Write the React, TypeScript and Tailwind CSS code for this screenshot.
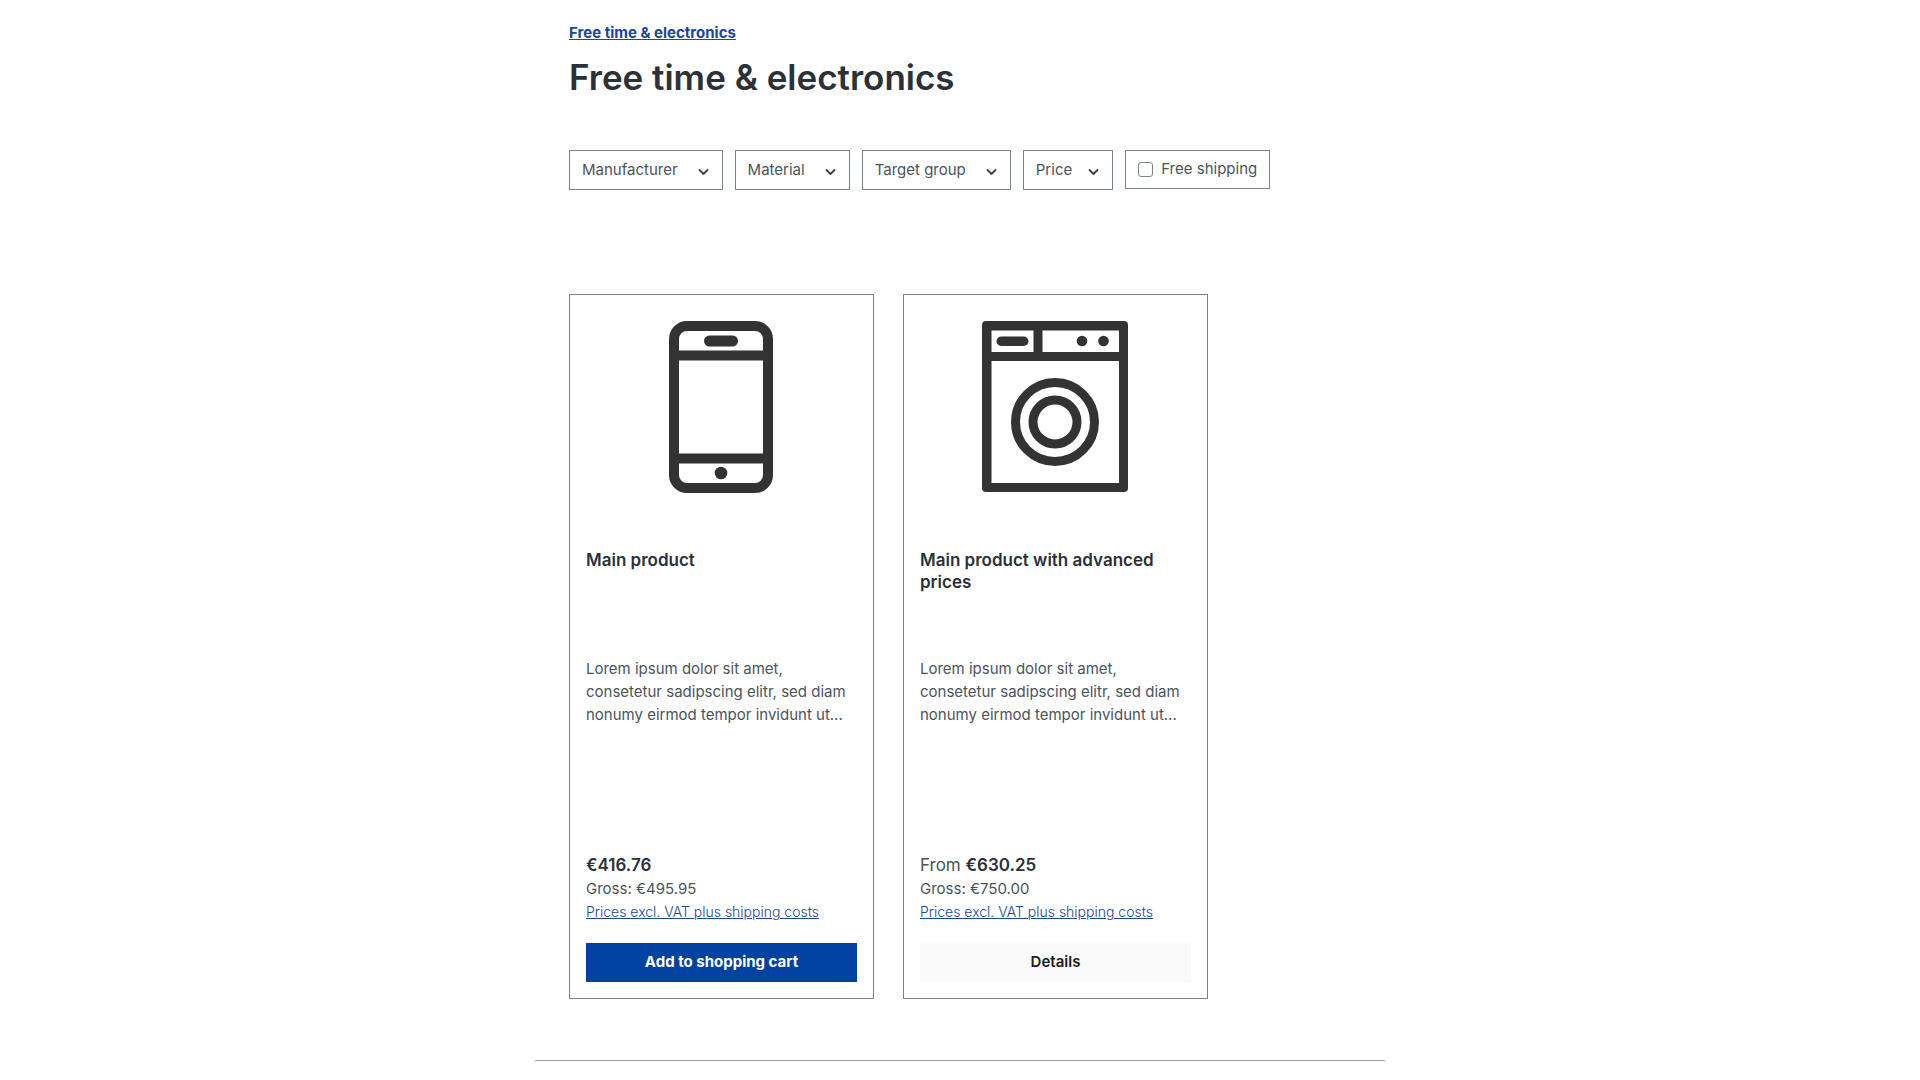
import React from "react";

function PhoneIcon() {
  return (
    <svg viewBox="0 0 104 172" className="h-[172px] w-[104px]" role="img" aria-label="Smartphone">
      <rect x="5" y="5" width="94" height="162" rx="13" fill="none" stroke="#333" strokeWidth="10" />
      <path d="M5 34.500H99M5 137.500H99" stroke="#333" strokeWidth="10" />
      <rect x="35" y="14.500" width="34" height="11" rx="5.500" fill="#333" />
      <circle cx="52" cy="152" r="6.300" fill="#333" />
    </svg>
  );
}

function WasherIcon() {
  return (
    <svg viewBox="0 0 146 172" className="h-[172px] w-[146px]" role="img" aria-label="Washing machine">
      <g stroke="#333" strokeWidth="9" fill="none">
        <path d="M5 35.500H141M56 5V35" />
        <circle cx="73" cy="101" r="39.500" />
        <circle cx="73" cy="101" r="22" />
      </g>
      <path
        fill="#333"
        fillRule="evenodd"
        d="M4 0H142Q146 0 146 4V167Q146 171 142 171H4Q0 171 0 167V4Q0 0 4 0ZM9.500 9.500V162H137V9.500Z"
      />
      <rect x="14.500" y="15.500" width="32" height="9.500" rx="4.750" fill="#333" />
      <circle cx="100" cy="20" r="5.300" fill="#333" />
      <circle cx="121.500" cy="20" r="5.300" fill="#333" />
    </svg>
  );
}

function Filter({ label, compact }: { label: string; compact?: boolean }) {
  return (
    <button
      type="button"
      aria-haspopup="listbox"
      className={
        compact
          ? "flex h-10 items-center gap-4 border border-[#798490] px-3"
          : "flex h-10 items-center gap-5 border border-[#798490] px-3"
      }
    >
      {label}
      <svg viewBox="0 0 12 12" className="mt-1 size-3" aria-hidden="true">
        <path d="M1.500 4L5.500 8L9.500 4" fill="none" stroke="#39434a" strokeWidth="1.800" strokeLinecap="round" strokeLinejoin="round" />
      </svg>
    </button>
  );
}

interface ProductProps {
  name: string;
  icon: React.ReactNode;
  from?: boolean;
  price: string;
  gross: string;
  action: string;
  primary?: boolean;
}

function Product({ name, icon, from, price, gross, action, primary }: ProductProps) {
  return (
    <article className="flex flex-col border border-[#798490] p-4">
      <div className="flex h-[220px] justify-center pt-[10px] pr-[1px]">{icon}</div>
      <h2 className="mt-[18px] h-[88px] text-[17px] leading-[22px] font-semibold text-[#2b3136]">{name}</h2>
      <p className="mt-5 leading-[23px]">
        Lorem ipsum dolor sit amet, consetetur sadipscing elitr, sed diam nonumy eirmod tempor invidunt ut...
      </p>
      <p className="mt-[127px] text-[17px] leading-6">
        {from && "From "}
        <strong className="font-semibold text-[#2b3136]">{price}</strong>
      </p>
      <p className="leading-[23px]">Gross: {gross}</p>
      <a href="#shipping" className="self-start text-[14px] leading-[23px] font-light text-[#1d4598] underline">
        Prices excl. VAT plus shipping costs
      </a>
      <button
        type="button"
        className={
          primary
            ? "mt-5 h-[39px] bg-[#0042a0] font-bold text-white"
            : "mt-5 h-[39px] bg-[#f9f9f9] font-semibold text-[#1c1e20]"
        }
      >
        {action}
      </button>
    </article>
  );
}

export default function App() {
  return (
    <main className="mx-auto max-w-[850px] bg-white pt-[21px] font-['Inter',sans-serif] text-[15px] text-[#4a545b]">
      <div className="px-[34px]">
        <nav aria-label="Breadcrumb" className="leading-6">
          <a href="#electronics" className="font-bold text-[#1d4598] underline">
            Free time &amp; electronics
          </a>
        </nav>
        <h1 className="mt-[10px] text-[35px] leading-[44px] font-semibold text-[#2b3136]">Free time &amp; electronics</h1>
        <div className="mt-[51px] flex flex-wrap items-start gap-3">
          <Filter label="Manufacturer" />
          <Filter label="Material" />
          <Filter label="Target group" />
          <Filter label="Price" compact />
          <label className="flex h-[39px] items-center gap-2 border border-[#798490] px-3">
            <input type="checkbox" className="size-[15px] appearance-none rounded-[3px] border border-[#798490]" />
            Free shipping
          </label>
        </div>
        <div className="mt-[104px] grid grid-cols-[repeat(auto-fill,305px)] gap-[29px]">
          <Product name="Main product" icon={<PhoneIcon />} price="€416.76" gross="€495.95" action="Add to shopping cart" primary />
          <Product name="Main product with advanced prices" icon={<WasherIcon />} from price="€630.25" gross="€750.00" action="Details" />
        </div>
      </div>
      <hr className="mt-[61px] border-t border-[#94a3a9]" />
    </main>
  );
}
